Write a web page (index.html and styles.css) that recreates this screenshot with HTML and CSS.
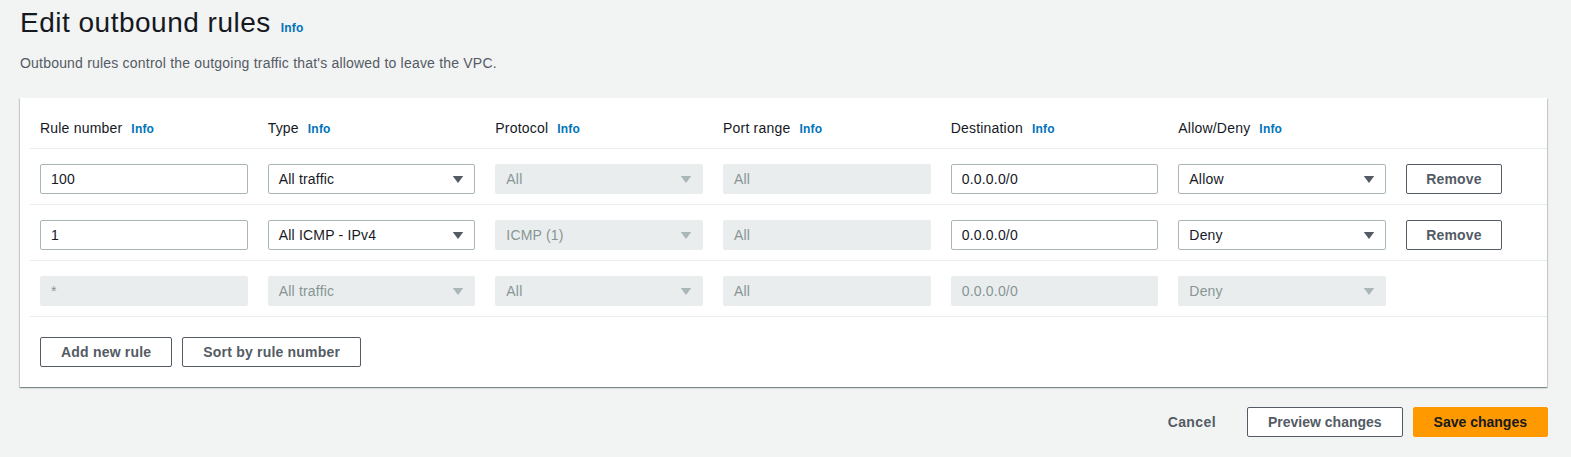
FILE: index.html
```html
<!DOCTYPE html>
<html lang="en">
<head>
<meta charset="utf-8">
<title>Edit outbound rules</title>
<link rel="stylesheet" href="styles.css">
</head>
<body>
<header class="page-head">
  <h1 class="title">Edit outbound rules <a class="info info-title">Info</a></h1>
  <p class="desc">Outbound rules control the outgoing traffic that's allowed to leave the VPC.</p>
</header>

<section class="card">
  <div class="grid head">
    <div class="label">Rule number <a class="info">Info</a></div>
    <div class="label">Type <a class="info">Info</a></div>
    <div class="label">Protocol <a class="info">Info</a></div>
    <div class="label">Port range <a class="info">Info</a></div>
    <div class="label">Destination <a class="info">Info</a></div>
    <div class="label">Allow/Deny <a class="info">Info</a></div>
    <div></div>
  </div>

  <div class="grid row">
    <div class="field">100</div>
    <div class="field select">All traffic<svg class="caret" viewBox="0 0 12 8"><path d="M0 0h12L6 8z"/></svg></div>
    <div class="field select disabled">All<svg class="caret" viewBox="0 0 12 8"><path d="M0 0h12L6 8z"/></svg></div>
    <div class="field disabled">All</div>
    <div class="field">0.0.0.0/0</div>
    <div class="field select">Allow<svg class="caret" viewBox="0 0 12 8"><path d="M0 0h12L6 8z"/></svg></div>
    <div><button class="btn">Remove</button></div>
  </div>

  <div class="grid row">
    <div class="field">1</div>
    <div class="field select">All ICMP - IPv4<svg class="caret" viewBox="0 0 12 8"><path d="M0 0h12L6 8z"/></svg></div>
    <div class="field select disabled">ICMP (1)<svg class="caret" viewBox="0 0 12 8"><path d="M0 0h12L6 8z"/></svg></div>
    <div class="field disabled">All</div>
    <div class="field">0.0.0.0/0</div>
    <div class="field select">Deny<svg class="caret" viewBox="0 0 12 8"><path d="M0 0h12L6 8z"/></svg></div>
    <div><button class="btn">Remove</button></div>
  </div>

  <div class="grid row last">
    <div class="field disabled">*</div>
    <div class="field select disabled">All traffic<svg class="caret" viewBox="0 0 12 8"><path d="M0 0h12L6 8z"/></svg></div>
    <div class="field select disabled">All<svg class="caret" viewBox="0 0 12 8"><path d="M0 0h12L6 8z"/></svg></div>
    <div class="field disabled">All</div>
    <div class="field disabled">0.0.0.0/0</div>
    <div class="field select disabled">Deny<svg class="caret" viewBox="0 0 12 8"><path d="M0 0h12L6 8z"/></svg></div>
    <div></div>
  </div>

  <div class="card-actions">
    <button class="btn">Add new rule</button>
    <button class="btn">Sort by rule number</button>
  </div>
</section>

<footer class="page-actions">
  <button class="btn link">Cancel</button>
  <button class="btn">Preview changes</button>
  <button class="btn primary">Save changes</button>
</footer>
</body>
</html>
```

FILE: styles.css
```css
* { box-sizing: border-box; }

html, body {
  margin: 0;
  background: #f2f3f3;
}

body {
  padding: 0 24px 0 20px;
  font-family: "Liberation Sans", Arial, sans-serif;
  font-size: 14px;
  line-height: 20px;
  letter-spacing: 0.2px;
  color: #16191f;
}

.page-head {
  padding-top: 5px;
}

.title {
  margin: 0;
  font-size: 28px;
  line-height: 36px;
  font-weight: 400;
  letter-spacing: 0.5px;
  color: #16191f;
  display: flex;
  align-items: baseline;
}

.info {
  font-size: 12px;
  line-height: 16px;
  font-weight: 700;
  letter-spacing: 0.2px;
  color: #0073bb;
  margin-left: 9px;
}

.info-title {
  margin-left: 10px;
}

.desc {
  margin: 12px 0 0;
  color: #545b64;
  font-size: 14px;
  line-height: 20px;
}

.card {
  margin-top: 25px;
  background: #fff;
  padding-left: 10px;
  box-shadow: 0 1px 1px 0 rgba(0, 28, 36, 0.3), 1px 1px 1px 0 rgba(0, 28, 36, 0.15), -1px 1px 1px 0 rgba(0, 28, 36, 0.15);
}

.grid {
  display: grid;
  grid-template-columns: repeat(6, 1fr) 121px;
  column-gap: 20px;
  padding: 0 20px 0 10px;
  align-items: center;
}

.head {
  padding-top: 20px;
  padding-bottom: 10px;
}

.label {
  white-space: nowrap;
  display: flex;
  align-items: baseline;
  height: 20px;
  line-height: 20px;
}

.row {
  border-top: 1px solid #eaeded;
  padding-top: 15px;
  padding-bottom: 10px;
}

.row.last {
  border-bottom: 1px solid #eaeded;
}

.field {
  height: 30px;
  border: 1px solid #aab7b8;
  border-radius: 2px;
  background: #fff;
  padding: 4px 10px;
  color: #16191f;
  display: flex;
  align-items: center;
  justify-content: space-between;
  white-space: nowrap;
}

.field.disabled {
  background: #eaeded;
  border-color: #eaeded;
  color: #879596;
}

.caret {
  width: 12px;
  height: 7px;
  fill: #545b64;
  flex: none;
}

.field.disabled .caret {
  fill: #aab7b8;
}

.btn {
  font-family: inherit;
  font-size: 14px;
  line-height: 20px;
  font-weight: 700;
  letter-spacing: 0.2px;
  color: #545b64;
  background: #fff;
  border: 1px solid #545b64;
  border-radius: 2px;
  padding: 4px 20px;
  height: 30px;
  cursor: pointer;
  white-space: nowrap;
}

.row .btn {
  width: 96px;
  padding: 4px 0;
}

.card-actions {
  display: flex;
  gap: 10px;
  padding: 20px 20px 20px 10px;
}

.page-actions {
  margin-top: 20px;
  display: flex;
  justify-content: flex-end;
  gap: 10px;
  margin-right: -1px;
}

.page-actions .btn {
  letter-spacing: 0;
}

.btn.link {
  border-color: transparent;
  background: transparent;
  letter-spacing: 0.4px;
}

.btn.primary {
  background: #ff9900;
  border-color: #ff9900;
  color: #16191f;
}
```
